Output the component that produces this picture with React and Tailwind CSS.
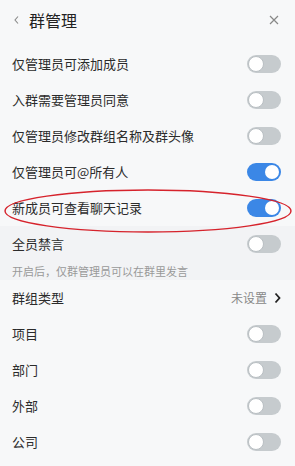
import React from "react";

function Toggle({ on }) {
  return on ? (
    <div className="w-[34px] h-[18px] rounded-full bg-[#3b87e6] flex items-center justify-end pr-[2px]">
      <div className="w-[14px] h-[14px] rounded-full bg-white" />
    </div>
  ) : (
    <div className="w-[34px] h-[18px] rounded-full bg-[#c6cbce] flex items-center pl-[1px]">
      <div className="w-[16px] h-[16px] rounded-full bg-white border border-[#b9bfc3]" />
    </div>
  );
}

function Row({ label, on }) {
  return (
    <div className="h-[36px] flex items-center justify-between pl-[12px] pr-[14px]">
      <span className="text-[13px] text-[#2b2b2b]">{label}</span>
      <Toggle on={on} />
    </div>
  );
}

export default function App() {
  return (
    <div
      className="relative w-[295px] h-[466px] bg-[#f7f8f9] overflow-hidden"
      style={{ fontFamily: '"Noto Sans CJK SC", "Noto Sans", sans-serif' }}
    >
      <div className="h-[40px] flex items-center justify-between pl-[13px] pr-[16px]">
        <div className="flex items-center">
          <svg width="7" height="10" viewBox="0 0 7 10" className="mr-[9px]">
            <path d="M5 1.5 L2 5 L5 8.5" fill="none" stroke="#888" strokeWidth="1.1" />
          </svg>
          <span className="text-[16px] text-[#222]">群管理</span>
        </div>
        <svg width="10" height="10" viewBox="0 0 10 10">
          <path d="M1 1 L9 9 M9 1 L1 9" stroke="#888" strokeWidth="1.2" />
        </svg>
      </div>
      <div className="h-[6px]" />
      <Row label="仅管理员可添加成员" on={false} />
      <Row label="入群需要管理员同意" on={false} />
      <Row label="仅管理员修改群组名称及群头像" on={false} />
      <Row label="仅管理员可@所有人" on={true} />
      <Row label="新成员可查看聊天记录" on={true} />
      <div className="bg-[#f2f3f5]">
        <Row label="全员禁言" on={false} />
        <div className="h-[18px] pl-[12px] flex items-center text-[11px] text-[#999]">
          开启后，仅群管理员可以在群里发言
        </div>
      </div>
      <div className="h-[36px] flex items-center justify-between pl-[12px] pr-[14px]">
        <span className="text-[13px] text-[#2b2b2b]">群组类型</span>
        <div className="flex items-center">
          <span className="text-[12px] text-[#888] mr-[7px]">未设置</span>
          <svg width="7" height="12" viewBox="0 0 7 12">
            <path d="M1.5 1.5 L5.5 6 L1.5 10.5" fill="none" stroke="#222" strokeWidth="1.8" />
          </svg>
        </div>
      </div>
      <Row label="项目" on={false} />
      <Row label="部门" on={false} />
      <Row label="外部" on={false} />
      <Row label="公司" on={false} />
      <svg
        className="absolute left-0 top-0 pointer-events-none"
        width="295"
        height="466"
      >
        <ellipse cx="148" cy="211" rx="143" ry="21" fill="none" stroke="#d6232c" strokeWidth="1.4" />
      </svg>
    </div>
  );
}
